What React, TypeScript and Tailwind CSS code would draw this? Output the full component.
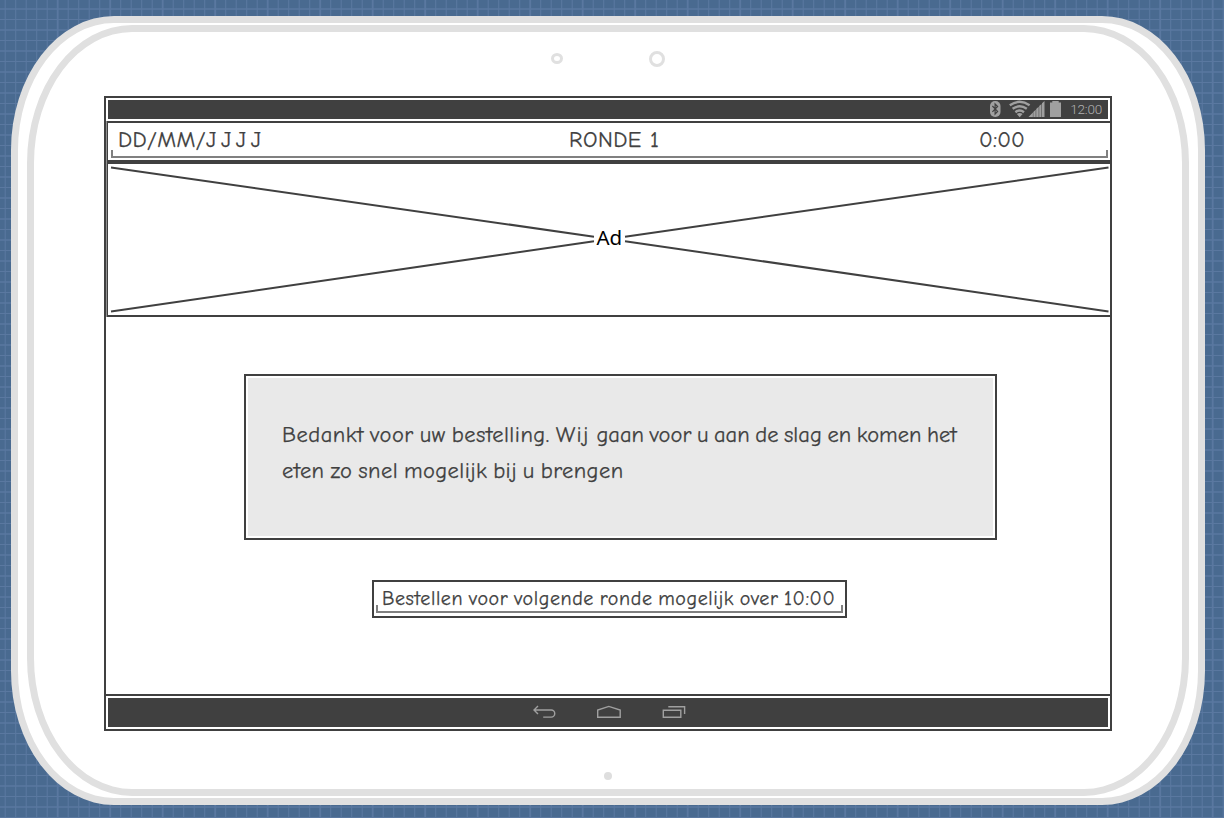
import React from "react";

const verticals = Array.from({ length: 117 }, (_, i) => 5.2 + i * 10.5);
const horizontals = Array.from({ length: 78 }, (_, i) => 9 + i * 10.5);
const handwriting =
  "font-['Comic_Sans_MS','Comic_Neue','Open_Sans',sans-serif] text-[#404040] [-webkit-text-stroke:0.25px_#404040]";

function Grid() {
  return (
    <svg className="absolute inset-0" width="1224" height="818" aria-hidden="true">
      <rect width="1224" height="818" fill="#496a90" />
      {verticals.map((x, i) => (
        <line key={x} x1={x} x2={x} y1="0" y2="818" stroke="#5a78a0" strokeWidth={i % 5 === 0 && i > 0 ? 1.9 : 1.1} />
      ))}
      {horizontals.map((y, i) => (
        <line key={y} x1="0" x2="1224" y1={y} y2={y} stroke="#5a78a0" strokeWidth={i % 2 === 0 ? 1.6 : 1.1} />
      ))}
    </svg>
  );
}

function StatusIcons() {
  return (
    <svg width="76" height="19" viewBox="988 100 76 19" fill="none" aria-hidden="true">
      <rect x="991" y="101" width="10.5" height="16" rx="5" fill="#a0a0a0" />
      <path d="M993.4 106l5.2 5.4-2.5 2.6v-10l2.5 2.5-5.2 5.4" stroke="#404040" strokeWidth="1.2" />
      <g stroke="#a0a0a0" strokeWidth="2.4">
        <path d="M1010.8 105.2q9.9-6.8 19.8 0" />
        <path d="M1013.6 108.8q7.1-5 14.2 0" />
        <path d="M1016.4 112.2q4.3-3.2 8.6 0" />
      </g>
      <path d="M1017.8 114q2.9-2 5.8 0l-2.9 3.2z" fill="#a0a0a0" />
      <g fill="#a0a0a0">
        <path d="M1029.5 117l4.4-4.4v4.4zM1034.3 117v-5l2.4-2.2v7.2zM1037.2 117v-8l2.5-2.2v10.2zM1040.2 117v-11l2.3-2v13zM1043 117v-13.8l2.5-2.3v16.1z" />
        <path d="M1051 102.5h2.3v-1.5h6.4v1.5h2.3v14.5h-11z" />
      </g>
    </svg>
  );
}

function Bracket() {
  return <div className="h-2 border-x-2 border-b-2 border-[#808080]" />;
}

export default function App() {
  return (
    <div className="relative h-[818px] w-[1224px] overflow-hidden">
      <Grid />
      <div className="relative flex h-full w-full pt-4 pl-[11px]">
        <div className="h-[789px] w-[1194px] rounded-[103px/134px] border-[7px] border-[#e0e0e0] bg-white pt-[2px] pl-[9px]">
          <div className="flex h-[771px] w-[1162px] flex-col items-center rounded-[105px/138px] border-[7px] border-[#e0e0e0] bg-white">
            <div className="flex h-[64px] w-full shrink-0 justify-center pt-[18px]">
              <svg width="116" height="20" fill="none" stroke="#e0e0e0" aria-hidden="true">
                <ellipse cx="7" cy="8.5" rx="4.5" ry="4" strokeWidth="3" />
                <circle cx="107" cy="9" r="6.5" strokeWidth="3" />
              </svg>
            </div>

            <main className="flex h-[635px] w-[1008px] shrink-0 flex-col border-2 border-[#404040] bg-white">
              <div className="mx-[2px] mt-[2px] flex h-[19px] shrink-0 items-center justify-end bg-[#404040] pr-[6px]">
                <StatusIcons />
                <span className="ml-[7px] font-['Roboto',sans-serif] text-[13.5px] leading-[19px] font-light tracking-[-0.2px] text-[#b0b0b0]">12:00</span>
              </div>

              <div className="mt-[2px] shrink-0 bg-[#909090] pl-px">
                <header className="flex h-[41px] flex-col border-y-2 border-l border-[#404040] bg-white">
                  <div className={`${handwriting} grid h-[27px] grid-cols-[451px_410px_auto] pt-[2px] pl-[10px] text-[22.5px] leading-[30px] whitespace-nowrap`}>
                    <span className="tracking-[0.4px]">
                      DD/MM/<span className="tracking-[4.6px]">JJJJ</span>
                    </span>
                    <span className="tracking-[0.5px]">RONDE 1</span>
                    <span className="tracking-[0.2px]">0:00</span>
                  </div>
                  <div className="pr-[2px] pl-[3px]"><Bracket /></div>
                </header>
                <section className="border-y-2 border-l border-[#404040] bg-white">
                  <svg className="block" width="1002" height="151" viewBox="108 164 1002 151" aria-label="Ad">
                    <path d="M111 167.5L594 236.7M625 241.2L1108.5 311.5M111 311.5L594 241.2M625 236.7L1108.5 167.5" stroke="#404040" strokeWidth="2" />
                    <text x="609.3" y="244.5" textAnchor="middle" className="fill-black font-['Noto_Sans',sans-serif] text-[20.5px]">Ad</text>
                  </svg>
                </section>
              </div>

              <div className="flex grow flex-col pt-[57px] pl-[138px]">
                <section className="h-[166px] w-[753px] border-2 border-[#404040] bg-white p-[2px]">
                  <div className="h-full bg-[#e9e9e9] pt-[39px] pl-[34px]">
                    <p className={`${handwriting} h-[66px] overflow-hidden text-[22.5px] leading-9 tracking-[0.5px] whitespace-nowrap [word-spacing:-2px]`}>
                      Bedankt voor uw bestelling. <span className="tracking-[1.3px]">Wij </span>
                      <span className="tracking-[0.02px]">gaan voor u aan de slag en komen het</span>
                      <br />
                      <span className="tracking-[0.42px]">eten zo snel mogelijk bij u brengen</span>
                    </p>
                  </div>
                </section>
                <div className="mt-[40px] ml-[128px] flex h-[38px] w-[475px] flex-col border-2 border-[#404040] bg-white">
                  <div className={`${handwriting} h-[23px] pl-2 text-[20px] leading-[33px] tracking-[0.6px] whitespace-nowrap [word-spacing:-1.6px]`}>
                    Bestellen voor volgende ronde mogelijk over 10:00
                  </div>
                  <div className="px-[2px]"><Bracket /></div>
                </div>
              </div>

              <nav className="shrink-0 border-t-2 border-[#404040] p-[2px]">
                <div className="flex h-[29px] justify-center bg-[#404040]">
                  <svg className="block" width="156" height="29" viewBox="530 698 156 29" fill="none" stroke="#a0a0a0" strokeWidth="1.4" aria-hidden="true">
                    <path d="M538 706l-4 4 4 4M534 710h17.2a3.4 3.4 0 010 7.1h-8" />
                    <path d="M597.7 717.3v-7.2l11.1-3.7 11.4 3.7v7.2z" />
                    <path d="M663.3 710.2h17.5v7.1h-17.5zM668.3 706.8h16.3v7.2" />
                  </svg>
                </div>
              </nav>
            </main>

            <div className="mt-[41px] size-2 rounded-full bg-[#dedede]" />
          </div>
        </div>
      </div>
    </div>
  );
}
